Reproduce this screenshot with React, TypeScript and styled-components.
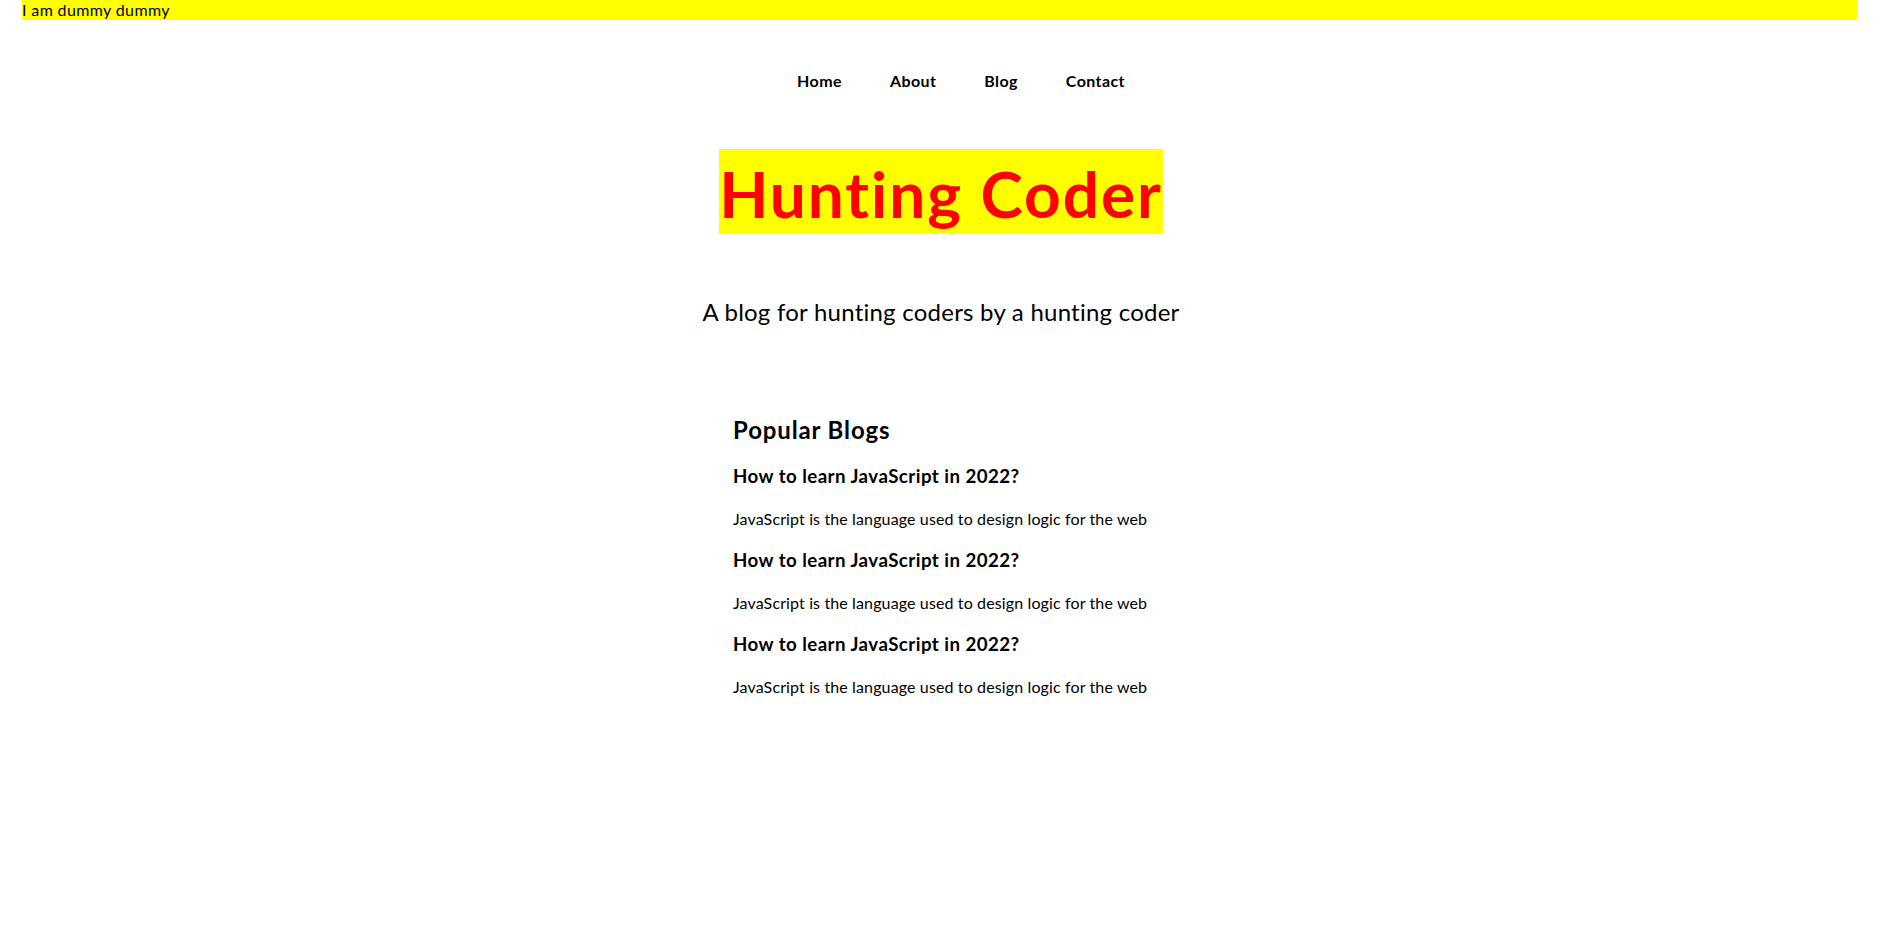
import styled, { createGlobalStyle } from "styled-components";

const GlobalStyle = createGlobalStyle`
  html, body {
    margin: 0;
    padding: 0;
    background: #fff;
    color: #000;
    font-family: Lato, "Segoe UI", "Open Sans", sans-serif;
    font-variant-ligatures: none;
  }
`;

const DummyBar = styled.div`
  margin: 0 25px 0 22px;
  height: 20px;
  line-height: 20px;
  font-size: 16px;
  letter-spacing: 0.023em;
  background: #ffff00;
`;

const Nav = styled.nav`
  margin-top: 51px;
`;

const NavList = styled.ul`
  display: flex;
  justify-content: center;
  gap: 48px;
  margin: 0;
  padding: 0 0 0 40px;
  list-style: none;
  li {
    font-size: 16px;
    font-weight: 700;
    line-height: 20px;
    letter-spacing: 0.025em;
  }
`;

const Main = styled.main`
  display: flex;
  flex-direction: column;
  align-items: center;
`;

const Title = styled.h1`
  margin: 58px 0 0;
  padding-top: 5px;
  height: 80px;
  line-height: 80px;
  font-size: 64px;
  font-weight: 700;
  letter-spacing: 0.03em;
  color: #ff0000;
  background: #ffff00;
`;

const Tagline = styled.p`
  margin: 62px 0 0;
  font-size: 24px;
  line-height: 32px;
  letter-spacing: 0.01em;
`;

const Blogs = styled.section`
  width: 416px;
  margin-top: 86px;
  display: flex;
  flex-direction: column;
`;

const BlogsHeading = styled.h2`
  margin: 0 0 18px;
  font-size: 24px;
  line-height: 32px;
  font-weight: 700;
  letter-spacing: 0.036em;
`;

const BlogTitle = styled.h3`
  margin: 0 0 20px;
  font-size: 18.7px;
  line-height: 24px;
  font-weight: 700;
  letter-spacing: 0.024em;
`;

const BlogText = styled.p`
  margin: 0 0 18px;
  font-size: 16px;
  line-height: 22px;
  letter-spacing: 0.008em;
`;

const blogs = [1, 2, 3].map((n) => ({
  id: n,
  title: "How to learn JavaScript in 2022?",
  desc: "JavaScript is the language used to design logic for the web",
}));

export default function App() {
  return (
    <>
      <GlobalStyle />
      <DummyBar>I am dummy dummy</DummyBar>
      <Nav>
        <NavList>
          <li>Home</li>
          <li>About</li>
          <li>Blog</li>
          <li>Contact</li>
        </NavList>
      </Nav>
      <Main>
        <Title>Hunting Coder</Title>
        <Tagline>A blog for hunting coders by a hunting coder</Tagline>
        <Blogs>
          <BlogsHeading>Popular Blogs</BlogsHeading>
          {blogs.map((b) => (
            <div key={b.id}>
              <BlogTitle>{b.title}</BlogTitle>
              <BlogText>{b.desc}</BlogText>
            </div>
          ))}
        </Blogs>
      </Main>
    </>
  );
}
